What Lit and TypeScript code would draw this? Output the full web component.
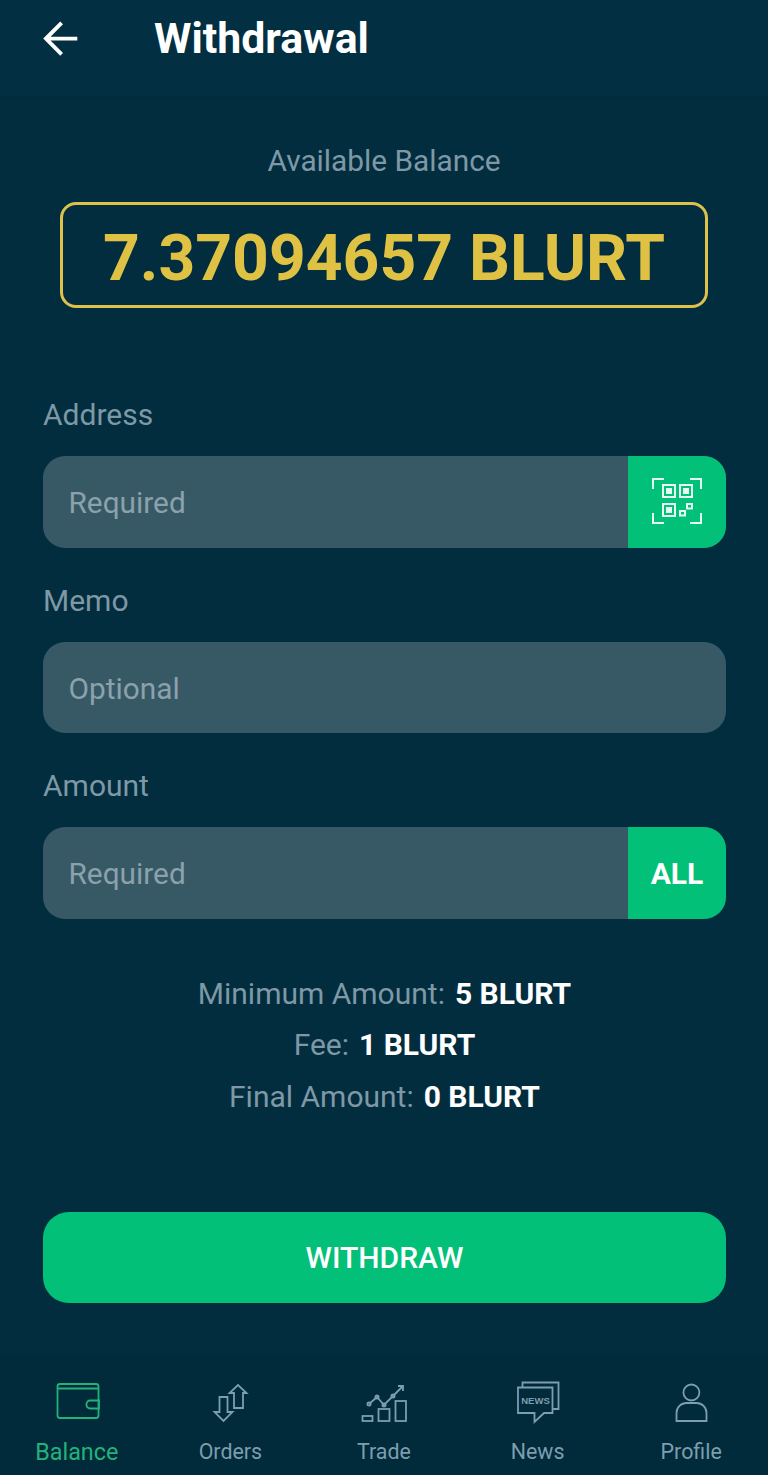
import { LitElement, html, css, svg } from 'lit';
import { customElement } from 'lit/decorators.js';

const NAV = [
  {
    label: 'Balance',
    active: true,
    icon: svg`<rect x="8.5" y="4" width="41" height="34" rx="2.5"/><path d="M8.5 8.5h41"/><path d="M50 20.5h-9a3.5 3.5 0 0 0-3.5 3.5v1a3.5 3.5 0 0 0 3.5 3.5h9z"/>`,
  },
  {
    label: 'Orders',
    icon: svg`<path d="M17.5 17h8v15h5l-9 9-9-9h5z"/><path d="M32 28h9V13h3.5L36 5l-8.5 8H32z"/>`,
  },
  {
    label: 'Trade',
    icon: svg`<rect x="6.5" y="36" width="10" height="5"/><rect x="22.5" y="29" width="11" height="12"/><rect x="39.5" y="21" width="10.5" height="20"/><path d="M13 24l8-7 7 8 9-9 10-10M42 6h5v5"/><circle cx="13" cy="24" r="1.6"/><circle cx="21" cy="17" r="1.6"/><circle cx="28" cy="25" r="1.6"/><circle cx="37" cy="16" r="1.6"/>`,
  },
  {
    label: 'News',
    icon: svg`<path d="M12.5 7V2.5h36V29h-6"/><path d="M8 7.5h34.5V33H34l-9.5 9V33H8z"/><text x="25.5" y="24" text-anchor="middle" class="news">NEWS</text>`,
  },
  {
    label: 'Profile',
    icon: svg`<circle cx="28.4" cy="12.5" r="8"/><path d="M13.5 41V33a10 10 0 0 1 10-10h10a10 10 0 0 1 10 10v8z"/>`,
  },
];

@customElement('app-root')
export class AppRoot extends LitElement {
  render() {
    return html`
      <header class="top">
        <svg class="back" viewBox="0 0 36 36" width="36" height="36">
          <path d="M35 19H4M19 3L3 19l16 16" transform="scale(0.98)" />
        </svg>
        <h1>Withdrawal</h1>
      </header>

      <main>
        <div class="avail">Available Balance</div>
        <div class="balance">7.37094657 BLURT</div>

        <div class="field first">
          <label>Address</label>
          <div class="input">
            <span>Required</span>
            <button class="side" aria-label="Scan">
              <svg viewBox="0 0 50 48" width="50" height="48">
                <path d="M1 11V1h11M38 1h11v10M1 35v10h11M38 45h11V35" />
                <rect x="11" y="7" width="12" height="12" />
                <rect x="28" y="7" width="12" height="12" />
                <rect x="11" y="26" width="12" height="12" />
                <rect x="14" y="10" width="6" height="6" class="dot" />
                <rect x="31" y="10" width="6" height="6" class="dot" />
                <rect x="14" y="29" width="6" height="6" class="dot" />
                <rect x="28" y="33" width="5" height="4.5" />
                <rect x="35" y="26" width="5" height="4.5" />
              </svg>
            </button>
          </div>
        </div>

        <div class="field">
          <label>Memo</label>
          <div class="input"><span>Optional</span></div>
        </div>

        <div class="field">
          <label>Amount</label>
          <div class="input">
            <span>Required</span>
            <button class="side all">ALL</button>
          </div>
        </div>

        <div class="info">
          <div>Minimum Amount:<b>5 BLURT</b></div>
          <div>Fee:<b>1 BLURT</b></div>
          <div>Final Amount:<b>0 BLURT</b></div>
        </div>

        <button class="withdraw">WITHDRAW</button>
      </main>

      <nav>
        ${NAV.map(
          (n) => html`
            <div class="tab ${n.active ? 'active' : ''}">
              <svg viewBox="0 0 56 46" width="56" height="46">${n.icon}</svg>
              <span>${n.label}</span>
            </div>
          `,
        )}
      </nav>
    `;
  }

  static styles = css`
    :host {
      display: flex;
      flex-direction: column;
      width: 768px;
      height: 1475px;
      background: #012d3f;
      font-family: Roboto, 'Liberation Sans', sans-serif;
      color: #fff;
      overflow: hidden;
    }

    .top {
      display: flex;
      align-items: center;
      height: 96px;
      padding: 0 0 20px 43px;
      box-sizing: border-box;
      background: #022f41;
      box-shadow: 0 1px 3px rgba(0, 0, 0, 0.06);
    }

    .back {
      fill: none;
      stroke: #fff;
      stroke-width: 4;
    }

    h1 {
      margin: 0 0 0 75px;
      font-size: 42.8px;
      font-weight: 700;
      line-height: 47px;
    }

    main {
      flex: 1;
      display: flex;
      flex-direction: column;
      padding: 0 42px 0 43px;
    }

    .avail {
      margin-top: 47px;
      margin-right: 1px;
      text-align: center;
      font-size: 29.8px;
      line-height: 36px;
      color: #7f98a6;
    }

    .balance {
      align-self: center;
      width: 648px;
      height: 106px;
      box-sizing: border-box;
      margin-top: 23px;
      margin-right: 1px;
      border: 3px solid #dcc24c;
      border-radius: 16px;
      text-align: center;
      font-size: 64.2px;
      font-weight: 700;
      line-height: 106px;
      color: #dfc243;
    }

    .field {
      margin-top: 35px;
    }

    .field.first {
      margin-top: 89px;
    }

    label {
      display: block;
      font-size: 30px;
      line-height: 36px;
      color: #7f98a6;
    }

    .input {
      display: flex;
      align-items: stretch;
      height: 91.5px;
      margin-top: 23px;
      border-radius: 22px;
      background: #375966;
      overflow: hidden;
    }

    .input span {
      flex: 1;
      align-self: center;
      padding: 2px 0 0 25.5px;
      font-size: 29.8px;
      color: #8ba1ac;
    }

    .side {
      display: flex;
      align-items: center;
      justify-content: center;
      width: 98px;
      padding: 2px 0 0;
      border: 0;
      background: #02c077;
      color: #fff;
      font-family: inherit;
    }

    .side svg {
      margin-top: -2px;
      fill: none;
      stroke: #fff;
      stroke-width: 2;
      opacity: 0.9;
    }

    .side svg .dot {
      fill: #fff;
      stroke: none;
    }

    .all {
      font-size: 30px;
      font-weight: 700;
    }

    .info {
      margin-top: 49.5px;
      text-align: center;
      font-size: 30px;
      line-height: 51.3px;
      color: #7f98a6;
    }

    .info b {
      margin-left: 10px;
      color: #fff;
      font-weight: 700;
    }

    .withdraw {
      height: 91.5px;
      margin-top: 90px;
      border: 0;
      border-radius: 26px;
      background: #02c077;
      color: #fff;
      font-family: inherit;
      font-size: 30px;
      font-weight: 500;
    }

    nav {
      display: flex;
      height: 120px;
      padding-top: 25px;
      box-sizing: border-box;
      background: #012a3a;
    }

    .tab {
      flex: 1;
      display: flex;
      flex-direction: column;
      align-items: center;
      color: #7c9eae;
      font-size: 21.4px;
    }

    .tab svg {
      fill: none;
      stroke: currentColor;
      stroke-width: 1.8;
    }

    .tab span {
      margin-top: 10px;
      line-height: 32px;
    }

    .tab.active {
      color: #22b27a;
      font-size: 23.4px;
    }

    .tab .news {
      fill: currentColor;
      stroke: none;
      font-family: 'Liberation Sans', sans-serif;
      font-size: 9.5px;
      font-weight: 700;
    }
  `;
}
